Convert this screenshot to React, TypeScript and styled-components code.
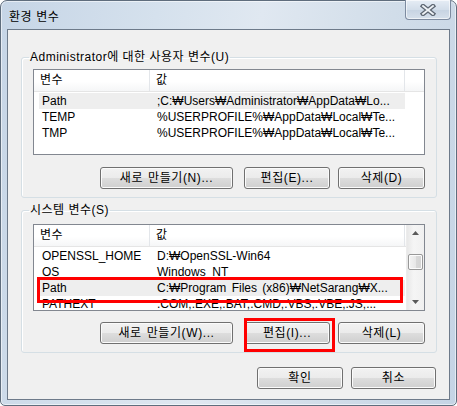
import React from "react";
import styled, { createGlobalStyle } from "styled-components";

const Global = createGlobalStyle`
  html, body { margin: 0; padding: 0; background: #ffffff; }
  body {
    font-family: "Liberation Sans", "Noto Sans CJK KR", sans-serif;
    font-size: 12px;
    color: #000;
  }
  #root { width: 457px; height: 406px; }
`;

const Window = styled.div`
  position: relative;
  box-sizing: border-box;
  width: 457px;
  height: 406px;
  border: 1px solid #5f6d7d;
  border-radius: 7px 7px 5px 5px;
  background: linear-gradient(100deg, #c6d5e6 0%, #d5e1ed 30%, #e0e8f1 50%, #d1dde9 75%, #c5d4e5 100%);
  box-shadow: inset 0 0 0 1px rgba(255, 255, 255, 0.55);
  padding: 0 6px 5px 6px;
  display: flex;
  flex-direction: column;
`;

const TitleBar = styled.div`
  height: 28px;
  display: flex;
  justify-content: space-between;
  align-items: flex-start;
`;

const Title = styled.span`
  font-family: "Noto Sans CJK KR", sans-serif;
  font-size: 12px;
  line-height: 14px;
  letter-spacing: 0.5px;
  word-spacing: 1px;
  margin: 8px 0 0 2px;
  color: #000;
`;

const CloseButton = styled.div`
  box-sizing: border-box;
  width: 46px;
  height: 20px;
  margin: -1px -1px 0 0;
  border: 1px solid #7d8ba0;
  border-top: none;
  border-radius: 0 0 4px 4px;
  background: linear-gradient(#e6edf5, #d3deea 50%, #c6d3e2 51%, #d6e0eb);
  box-shadow: inset 0 0 0 1px rgba(255, 255, 255, 0.6);
  display: flex;
  align-items: center;
  justify-content: center;
`;

const Client = styled.div`
  flex: 1;
  box-sizing: border-box;
  border: 1px solid #6d7a8a;
  background: #f0f0f0;
  padding: 20px 0 0 0;
  display: flex;
  flex-direction: column;
`;

const Group = styled.fieldset<{ $top: number }>`
  margin: ${(p) => p.$top}px 12px 0 13px;
  border: 1px solid #d5dfe5;
  border-radius: 3px;
  padding: 0 11px 8px 11px;
  min-width: 0;
  box-shadow: inset 1px 1px 0 #ffffff;
`;

const Legend = styled.legend`
  margin-left: -4px;
  padding: 0 1px;
  line-height: 14px;
  font-size: 12px;
  letter-spacing: 0.5px;
`;

const ListBox = styled.div<{ $top: number; $h: number }>`
  box-sizing: border-box;
  margin-top: ${(p) => p.$top}px;
  height: ${(p) => p.$h}px;
  border: 1px solid #828790;
  background: #ffffff;
  display: flex;
  overflow: hidden;
`;

const ListMain = styled.div`
  flex: 1;
  display: flex;
  flex-direction: column;
  overflow: hidden;
`;

const Header = styled.div`
  box-sizing: border-box;
  height: 22px;
  flex: none;
  display: grid;
  grid-template-columns: 116px 255px 1fr;
  background: linear-gradient(#ffffff 0%, #ffffff 55%, #f5f6f7 100%);
  border-bottom: 1px solid #e5e5e5;
`;

const HeaderCell = styled.div<{ $last?: boolean }>`
  padding-left: 6px;
  line-height: 21px;
  letter-spacing: 0.5px;
  border-right: ${(p) => (p.$last ? "none" : "1px solid #e3e6ea")};
  white-space: nowrap;
  overflow: hidden;
`;

const Rows = styled.div`
  padding-top: 1px;
  display: flex;
  flex-direction: column;
`;

const Row = styled.div<{ $sel?: boolean }>`
  margin-left: 5px;
  width: 366px;
  height: 16px;
  flex: none;
  display: grid;
  grid-template-columns: 111px 255px;
  background: ${(p) => (p.$sel ? "#eeeeee" : "transparent")};
  line-height: 16px;
  white-space: nowrap;
  word-spacing: 2px;
`;

const Cell = styled.div<{ $pad: number }>`
  padding-left: ${(p) => p.$pad}px;
  overflow: hidden;
`;

const ScrollBar = styled.div`
  width: 17px;
  flex: none;
  display: flex;
  flex-direction: column;
  align-items: center;
  background: linear-gradient(90deg, #e8e8e8, #f5f5f5 40%, #f0f0f0);
  border-left: 1px solid #ececec;
`;

const Arrow = styled.div`
  height: 16px;
  display: flex;
  align-items: center;
  justify-content: center;
`;

const Thumb = styled.div`
  box-sizing: border-box;
  width: 15px;
  height: 16px;
  margin-top: 13px;
  border: 1px solid #989898;
  border-radius: 2px;
  background: linear-gradient(90deg, #f3f3f3, #e8e8e8 50%, #d9d9d9 51%, #d4d4d4);
  box-shadow: inset 0 0 0 1px #fcfcfc;
`;

const Spacer = styled.div`
  flex: 1;
`;

const ButtonRow = styled.div<{ $top: number; $right?: number }>`
  display: flex;
  justify-content: flex-end;
  margin-top: ${(p) => p.$top}px;
  margin-right: ${(p) => p.$right ?? 0}px;
`;

const Button = styled.button<{ $w: number; $gap?: number }>`
  box-sizing: border-box;
  width: ${(p) => p.$w}px;
  height: 22px;
  margin-left: ${(p) => p.$gap ?? 0}px;
  padding: 0;
  border: 1px solid #707070;
  border-radius: 3px;
  background: linear-gradient(#f2f2f2 0%, #ebebeb 50%, #dddddd 51%, #cfcfcf 100%);
  box-shadow: inset 0 0 0 1px #fbfbfb;
  font-family: "Liberation Sans", "Noto Sans CJK KR", sans-serif;
  font-size: 12px;
  letter-spacing: 0.6px;
  word-spacing: 1px;
  color: #000;
  line-height: 20px;
`;

const Mark = styled.div<{ $l: number; $t: number; $w: number; $h: number }>`
  position: absolute;
  left: ${(p) => p.$l}px;
  top: ${(p) => p.$t}px;
  width: ${(p) => p.$w}px;
  height: ${(p) => p.$h}px;
  box-sizing: border-box;
  border: 3px solid #ff0000;
  pointer-events: none;
`;

type Item = { name: string; value: string; sel?: boolean };

const userVars: Item[] = [
  { name: "Path", value: ";C:₩Users₩Administrator₩AppData₩Lo...", sel: true },
  { name: "TEMP", value: "%USERPROFILE%₩AppData₩Local₩Te..." },
  { name: "TMP", value: "%USERPROFILE%₩AppData₩Local₩Te..." },
];

const sysVars: Item[] = [
  { name: "OPENSSL_HOME", value: "D:₩OpenSSL-Win64" },
  { name: "OS", value: "Windows_NT" },
  { name: "Path", value: "C:₩Program Files (x86)₩NetSarang₩X...", sel: true },
  { name: "PATHEXT", value: ".COM;.EXE;.BAT;.CMD;.VBS;.VBE;.JS;..." },
];

function VarList({ items, top, h, scroll }: { items: Item[]; top: number; h: number; scroll?: boolean }) {
  return (
    <ListBox $top={top} $h={h}>
      <ListMain>
        <Header>
          <HeaderCell>변수</HeaderCell>
          <HeaderCell>값</HeaderCell>
          <HeaderCell $last />
        </Header>
        <Rows>
          {items.map((it) => (
            <Row key={it.name} $sel={it.sel}>
              <Cell $pad={3}>{it.name}</Cell>
              <Cell $pad={7}>{it.value}</Cell>
            </Row>
          ))}
        </Rows>
      </ListMain>
      {scroll && (
        <ScrollBar>
          <Arrow>
            <svg width="7" height="4" viewBox="0 0 7 4">
              <path d="M3.5 0 L7 4 L0 4 Z" fill="#5a5a5a" />
            </svg>
          </Arrow>
          <Thumb />
          <Spacer />
          <Arrow>
            <svg width="7" height="4" viewBox="0 0 7 4">
              <path d="M0 0 L7 0 L3.5 4 Z" fill="#5a5a5a" />
            </svg>
          </Arrow>
        </ScrollBar>
      )}
    </ListBox>
  );
}

export default function App() {
  return (
    <>
      <Global />
      <Window>
        <TitleBar>
          <Title>환경 변수</Title>
          <CloseButton>
            <svg width="16" height="12" viewBox="0 0 16 12">
              <path d="M3 2 L13 10 M13 2 L3 10" stroke="#5d6672" strokeWidth="4.4" strokeLinecap="square" />
              <path d="M3 2 L13 10 M13 2 L3 10" stroke="#eef2f6" strokeWidth="1.8" strokeLinecap="square" />
            </svg>
          </CloseButton>
        </TitleBar>
        <Client>
          <Group $top={0}>
            <Legend>Administrator에 대한 사용자 변수(U)</Legend>
            <VarList items={userVars} top={5} h={86} />
            <ButtonRow $top={12}>
              <Button $w={133}>새로 만들기(N)...</Button>
              <Button $w={86} $gap={11}>편집(E)...</Button>
              <Button $w={87} $gap={8}>삭제(D)</Button>
            </ButtonRow>
          </Group>
          <Group $top={5}>
            <Legend>시스템 변수(S)</Legend>
            <VarList items={sysVars} top={7} h={87} scroll />
            <ButtonRow $top={11}>
              <Button $w={133}>새로 만들기(W)...</Button>
              <Button $w={86} $gap={11}>편집(I)...</Button>
              <Button $w={87} $gap={8}>삭제(L)</Button>
            </ButtonRow>
          </Group>
          <ButtonRow $top={14} $right={13}>
            <Button $w={86}>확인</Button>
            <Button $w={85} $gap={8}>취소</Button>
          </ButtonRow>
        </Client>
        <Mark $l={36} $t={276} $w={366} $h={26} />
        <Mark $l={243} $t={317} $w={91} $h={34} />
      </Window>
    </>
  );
}
